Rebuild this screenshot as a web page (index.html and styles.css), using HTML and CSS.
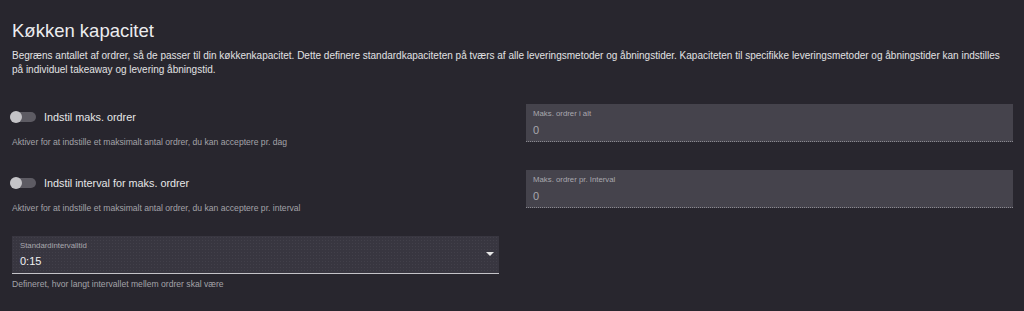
FILE: index.html
```html
<!DOCTYPE html>
<html lang="da">
<head>
<meta charset="utf-8">
<link rel="stylesheet" href="styles.css">
</head>
<body>
<div class="page">
  <h1 class="title">Køkken kapacitet</h1>
  <p class="desc">Begræns antallet af ordrer, så de passer til din køkkenkapacitet. Dette definere standardkapaciteten på tværs af alle leveringsmetoder og åbningstider. Kapaciteten til specifikke leveringsmetoder og åbningstider kan indstilles på individuel takeaway og levering åbningstid.</p>

  <div class="grid">
    <div class="toggle-block">
      <div class="toggle-row">
        <span class="switch"><span class="track"></span><span class="thumb"></span></span>
        <span class="toggle-label">Indstil maks. ordrer</span>
      </div>
      <div class="helper">Aktiver for at indstille et maksimalt antal ordrer, du kan acceptere pr. dag</div>
    </div>
    <div class="field">
      <div class="field-label">Maks. ordrer i alt</div>
      <div class="field-value">0</div>
    </div>

    <div class="toggle-block">
      <div class="toggle-row">
        <span class="switch"><span class="track"></span><span class="thumb"></span></span>
        <span class="toggle-label">Indstil interval for maks. ordrer</span>
      </div>
      <div class="helper">Aktiver for at indstille et maksimalt antal ordrer, du kan acceptere pr. interval</div>
    </div>
    <div class="field">
      <div class="field-label">Maks. ordrer pr. Interval</div>
      <div class="field-value">0</div>
    </div>

    <div class="select-block">
      <div class="select">
        <div class="select-text">
          <div class="field-label">Standardintervalltid</div>
          <div class="select-value">0:15</div>
        </div>
        <svg class="arrow" width="8" height="4" viewBox="0 0 8 4"><path d="M0 0 L8 0 L4 4 Z" fill="#e6e6e6"/></svg>
      </div>
      <div class="helper select-helper">Defineret, hvor langt intervallet mellem ordrer skal være</div>
    </div>
  </div>
</div>
</body>
</html>
```

FILE: styles.css
```css
html, body {
  margin: 0;
  padding: 0;
  background: #28262e;
}
body {
  font-family: "Liberation Sans", Arial, sans-serif;
  color: #e4e4e6;
}
.page {
  padding: 20px 11px 0 12px;
}
.title {
  margin: 0;
  font-size: 18.5px;
  font-weight: 400;
  line-height: 22px;
  color: #ececee;
}
.desc {
  margin: 7px 0 0 0;
  font-size: 10px;
  line-height: 13.5px;
  color: #e2e2e4;
}
.grid {
  display: grid;
  grid-template-columns: 487px 487px;
  grid-template-rows: 66px 66px auto;
  column-gap: 27px;
  margin-top: 28px;
}
.toggle-block {
  padding-top: 5px;
}
.toggle-row {
  display: flex;
  align-items: center;
  gap: 8px;
  height: 16px;
}
.switch {
  position: relative;
  width: 26px;
  height: 12px;
  flex: none;
  margin-left: -2px;
}
.track {
  position: absolute;
  left: 0;
  top: 1px;
  width: 26px;
  height: 10px;
  border-radius: 5px;
  background: #5d5b63;
}
.thumb {
  position: absolute;
  left: 0;
  top: 0;
  width: 12px;
  height: 12px;
  border-radius: 50%;
  background: #c4c3c7;
}
.toggle-label {
  font-size: 10.8px;
  color: #e6e6e8;
}
.helper {
  margin-top: 12px;
  font-size: 8.6px;
  line-height: 11px;
  color: #a3a2a8;
}
.field {
  height: 37px;
  background: #45434c;
  border-bottom: 1px dotted #8a8990;
  padding: 0 7px;
}
.field-label {
  font-size: 7.8px;
  color: #a9a8ae;
  padding-top: 5px;
  line-height: 10px;
}
.field-value {
  font-size: 11px;
  line-height: 14px;
  color: #a8a7ad;
  margin-top: 4px;
}
.select {
  height: 37px;
  background-color: #383640;
  background-image: radial-gradient(rgba(255,255,255,0.05) 0.6px, transparent 0.8px);
  background-size: 3px 3px;
  border-bottom: 1px solid #c4c3c8;
  display: flex;
  align-items: center;
  padding: 0 5px 0 8px;
}
.select-text {
  flex: 1;
  align-self: flex-start;
}
.select-value {
  font-size: 11px;
  line-height: 14px;
  color: #f0f0f2;
  margin-top: 3px;
}
.arrow {
  margin-top: -1px;
}
.select-helper {
  margin-top: 5px;
}
```
